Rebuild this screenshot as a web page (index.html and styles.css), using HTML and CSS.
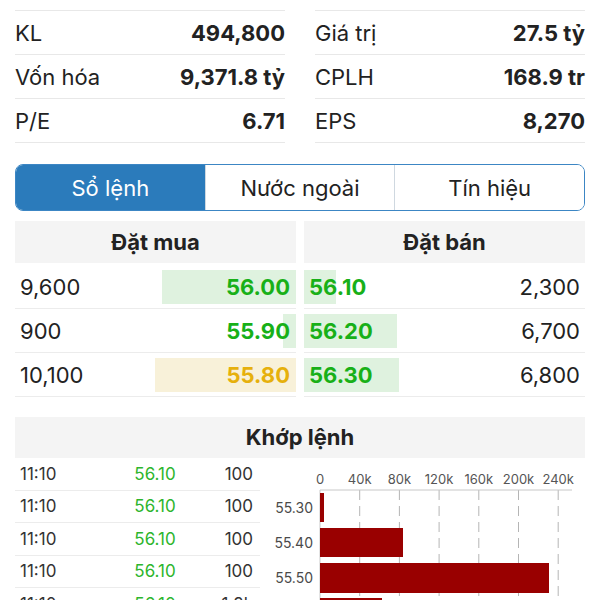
FILE: index.html
```html
<!DOCTYPE html>
<html lang="vi">
<head>
    <meta charset="UTF-8">
    <meta name="viewport" content="width=device-width, initial-scale=1.0">
    <title>Chi tiết cổ phiếu</title>
    <link rel="stylesheet" href="styles.css">
</head>
<body>
    <div class="page">
        <div class="stats">
            <div class="stat-col">
                <div class="stat"><span>KL</span><b>494,800</b></div>
                <div class="stat"><span>Vốn hóa</span><b>9,371.8 tỷ</b></div>
                <div class="stat"><span>P/E</span><b>6.71</b></div>
            </div>
            <div class="stat-col">
                <div class="stat"><span>Giá trị</span><b>27.5 tỷ</b></div>
                <div class="stat"><span>CPLH</span><b>168.9 tr</b></div>
                <div class="stat"><span>EPS</span><b>8,270</b></div>
            </div>
        </div>

        <div class="tabs">
            <button class="tab active" type="button">Sổ lệnh</button>
            <button class="tab" type="button">Nước ngoài</button>
            <button class="tab" type="button">Tín hiệu</button>
        </div>

        <div class="book">
            <div class="side buy">
                <div class="side-head">Đặt mua</div>
                <div class="order"><span class="qty">9,600</span><span class="price up" style="width: 134px">56.00</span></div>
                <div class="order"><span class="qty">900</span><span class="price up" style="width: 13px">55.90</span></div>
                <div class="order"><span class="qty">10,100</span><span class="price ref" style="width: 141px">55.80</span></div>
            </div>
            <div class="side sell">
                <div class="side-head">Đặt bán</div>
                <div class="order"><span class="price up" style="width: 32px">56.10</span><span class="qty">2,300</span></div>
                <div class="order"><span class="price up" style="width: 93px">56.20</span><span class="qty">6,700</span></div>
                <div class="order"><span class="price up" style="width: 95px">56.30</span><span class="qty">6,800</span></div>
            </div>
        </div>

        <div class="section-head">Khớp lệnh</div>
        <div class="matches">
            <div class="trades">
                <div class="trade"><span>11:10</span><span class="tprice">56.10</span><span class="tvol">100</span></div>
                <div class="trade"><span>11:10</span><span class="tprice">56.10</span><span class="tvol">100</span></div>
                <div class="trade"><span>11:10</span><span class="tprice">56.10</span><span class="tvol">100</span></div>
                <div class="trade"><span>11:10</span><span class="tprice">56.10</span><span class="tvol">100</span></div>
                <div class="trade"><span>11:10</span><span class="tprice">56.10</span><span class="tvol">1.2k</span></div>
            </div>
            <svg class="chart" width="325" height="160" viewBox="0 0 325 160">
                <g class="grid">
                    <line x1="99.7" y1="32" x2="99.7" y2="160"/>
                    <line x1="139.4" y1="32" x2="139.4" y2="160"/>
                    <line x1="179.1" y1="32" x2="179.1" y2="160"/>
                    <line x1="218.8" y1="32" x2="218.8" y2="160"/>
                    <line x1="258.5" y1="32" x2="258.5" y2="160"/>
                    <line x1="298.2" y1="32" x2="298.2" y2="160"/>
                </g>
                <line class="axis" x1="60" y1="32" x2="312" y2="32"/>
                <line class="axis" x1="60" y1="32" x2="60" y2="160"/>
                <g class="ticks">
                    <text x="60" y="26">0</text>
                    <text x="99.7" y="26">40k</text>
                    <text x="139.4" y="26">80k</text>
                    <text x="179.1" y="26">120k</text>
                    <text x="218.8" y="26">160k</text>
                    <text x="258.5" y="26">200k</text>
                    <text x="298.2" y="26">240k</text>
                </g>
                <g class="bars">
                    <rect x="60" y="35" width="4" height="29"/>
                    <rect x="60" y="70" width="83" height="29"/>
                    <rect x="60" y="105" width="229" height="30"/>
                    <rect x="60" y="140" width="62" height="29"/>
                </g>
                <g class="cats">
                    <text x="53" y="55">55.30</text>
                    <text x="53" y="90">55.40</text>
                    <text x="53" y="125">55.50</text>
                </g>
            </svg>
        </div>
    </div>
</body>
</html>
```

FILE: styles.css
```css
body {
    margin: 0;
    font-family: Inter, "Noto Sans", sans-serif;
    color: #222;
    background-color: #fff;
}

.page {
    padding: 10px 15px 0;
}

.stats {
    display: grid;
    grid-template-columns: 1fr 1fr;
    column-gap: 30px;
}

.stat-col {
    border-bottom: 1px solid #e8e8e8;
}

.stat {
    display: flex;
    justify-content: space-between;
    align-items: center;
    height: 44px;
    box-sizing: border-box;
    border-top: 1px solid #e8e8e8;
    font-size: 22px;
}

.stat b {
    font-weight: 700;
}

.tabs {
    display: flex;
    margin-top: 21px;
    height: 47px;
    box-sizing: border-box;
    border: 1px solid #3c86c4;
    border-radius: 8px;
    overflow: hidden;
}

.tab {
    flex: 1;
    border: none;
    border-left: 1px solid #cfd8e0;
    background-color: #fff;
    font-family: inherit;
    font-size: 22px;
    color: #222;
    padding: 0;
}

.tab:first-child {
    border-left: none;
}

.tab.active {
    background-color: #2b7bbb;
    color: #fff;
}

.book {
    display: flex;
    gap: 8px;
    margin-top: 10px;
}

.side {
    flex: 1;
}

.side-head,
.section-head {
    background-color: #f4f4f4;
    text-align: center;
    font-weight: 700;
    font-size: 22px;
    height: 42px;
    line-height: 42px;
    margin-bottom: 2px;
}

.order {
    display: flex;
    justify-content: space-between;
    align-items: center;
    height: 44px;
    box-sizing: border-box;
    padding: 5px 0;
    border-bottom: 1px solid #ececec;
    font-size: 22px;
}

.buy .qty {
    padding-left: 5px;
}

.sell .qty {
    padding-right: 5px;
}

.price {
    box-sizing: border-box;
    height: 34px;
    line-height: 34px;
    font-weight: 700;
    white-space: nowrap;
}

.buy .price {
    display: flex;
    justify-content: flex-end;
    padding-right: 6px;
}

.sell .price {
    padding-left: 5px;
}

.price.up {
    color: #18b018;
    background-color: #dff2df;
}

.price.ref {
    color: #e6b00c;
    background-color: #f8f1d9;
}

.section-head {
    margin-top: 20px;
    height: 41px;
    line-height: 41px;
    margin-bottom: 0;
}

.matches {
    display: flex;
    align-items: flex-start;
}

.trades {
    width: 245px;
}

.trade {
    display: grid;
    grid-template-columns: 95px 80px 1fr;
    align-items: center;
    height: 32.5px;
    box-sizing: border-box;
    border-bottom: 1px solid #ececec;
    font-size: 17px;
    color: #333;
    padding: 0 7px 0 5px;
}

.tprice {
    color: #2db52d;
    text-align: center;
}

.tvol {
    text-align: right;
}

.chart {
    display: block;
}

.chart .grid line {
    stroke: #b5b5b5;
    stroke-width: 1;
    stroke-dasharray: 10 6;
}

.chart .axis {
    stroke: #c8c8c8;
    stroke-width: 1;
}

.chart text {
    font-family: Inter, "Noto Sans", sans-serif;
    font-size: 13px;
    fill: #555;
}

.chart .ticks text {
    text-anchor: middle;
}

.chart .cats text {
    font-size: 14px;
    fill: #4a4a4a;
    text-anchor: end;
}

.chart .bars rect {
    fill: #990000;
}
```
